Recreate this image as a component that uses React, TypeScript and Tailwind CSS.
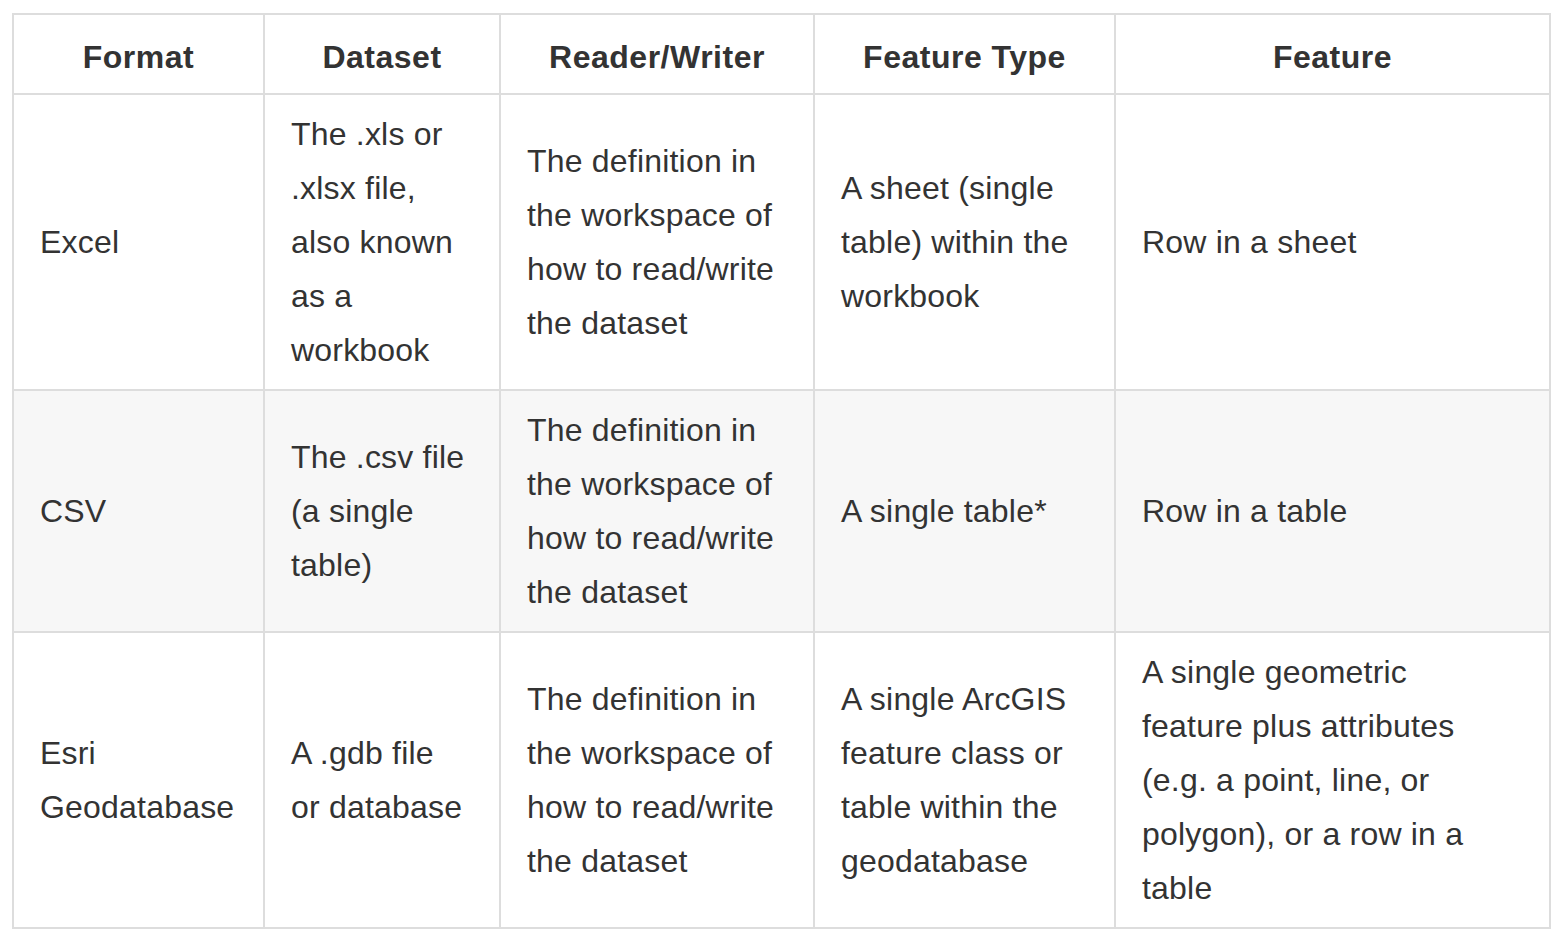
const headers = ["Format", "Dataset", "Reader/Writer", "Feature Type", "Feature"];

const rows: string[][][] = [
  [
    ["Excel"],
    ["The .xls or", ".xlsx file,", "also known", "as a", "workbook"],
    ["The definition in", "the workspace of", "how to read/write", "the dataset"],
    ["A sheet (single", "table) within the", "workbook"],
    ["Row in a sheet"],
  ],
  [
    ["CSV"],
    ["The .csv file", "(a single", "table)"],
    ["The definition in", "the workspace of", "how to read/write", "the dataset"],
    ["A single table*"],
    ["Row in a table"],
  ],
  [
    ["Esri", "Geodatabase"],
    ["A .gdb file", "or database"],
    ["The definition in", "the workspace of", "how to read/write", "the dataset"],
    ["A single ArcGIS", "feature class or", "table within the", "geodatabase"],
    [
      "A single geometric",
      "feature plus attributes",
      "(e.g. a point, line, or",
      "polygon), or a row in a",
      "table",
    ],
  ],
];

const widths = ["w-[251px]", "w-[236px]", "w-[314px]", "w-[301px]", "w-[435px]"];

export default function App() {
  return (
    <div className="min-h-[936px] bg-white pl-[12px] pt-[13px] font-['Liberation_Sans',Arial,sans-serif] text-[32px] leading-[54px] text-[#333]">
      <table className="w-[1537px] table-fixed border-collapse border-2 border-[#ddd]">
        <colgroup>
          {widths.map((w, i) => (
            <col key={i} className={w} />
          ))}
        </colgroup>
        <thead>
          <tr>
            {headers.map((h) => (
              <th
                key={h}
                className="border-2 border-[#ddd] px-[26px] pt-[15px] pb-[9px] text-center align-middle font-bold tracking-[0.5px]"
              >
                {h}
              </th>
            ))}
          </tr>
        </thead>
        <tbody>
          {rows.map((row, ri) => (
            <tr key={ri} className={ri % 2 === 1 ? "bg-[#f7f7f7]" : ""}>
              {row.map((lines, ci) => (
                <td
                  key={ci}
                  className="border-2 border-[#ddd] px-[26px] py-[12px] align-middle whitespace-nowrap tracking-[0.2px]"
                >
                  {lines.map((l, li) => (
                    <div key={li}>{l}</div>
                  ))}
                </td>
              ))}
            </tr>
          ))}
        </tbody>
      </table>
    </div>
  );
}
